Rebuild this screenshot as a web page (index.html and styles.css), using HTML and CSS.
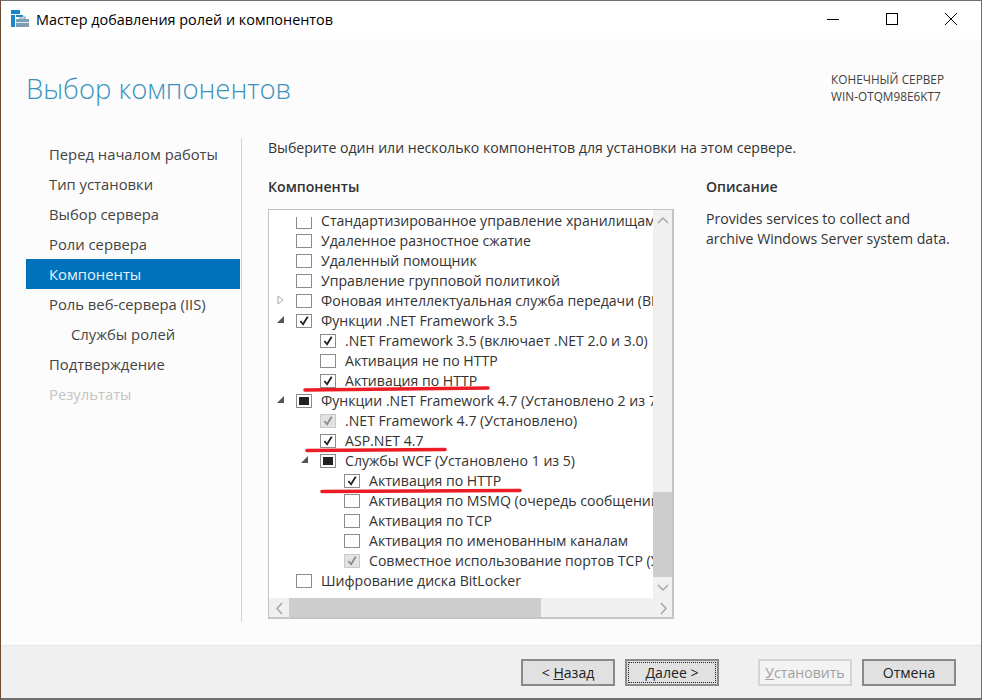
FILE: index.html
```html
<!DOCTYPE html>
<html lang="ru">
<head>
<meta charset="utf-8">
<title>Мастер добавления ролей и компонентов</title>
<link rel="stylesheet" href="styles.css">
</head>
<body>
<div class="window">
  <div class="titlebar">
    <svg class="appicon" width="18" height="18" viewBox="0 0 18 18"><rect x="0" y="0" width="9" height="4" fill="#1a86c8"/><rect x="0" y="5" width="4" height="12" fill="#1a86c8"/><rect x="5" y="5" width="7" height="2" fill="#1a86c8"/><rect x="5" y="9" width="13" height="8" fill="#7d9fb5"/><rect x="9" y="7" width="5" height="2" fill="none" stroke="#7d9fb5"/><rect x="5" y="12" width="13" height="1" fill="#dfe8ee"/></svg>
    <span class="wintitle">Мастер добавления ролей и компонентов</span>
    <div class="controls">
      <svg width="12" height="12" viewBox="0 0 12 12"><path d="M0 6.5H12" stroke="#000"/></svg>
      <svg width="12" height="12" viewBox="0 0 12 12"><rect x=".5" y=".5" width="11" height="11" fill="none" stroke="#000"/></svg>
      <svg width="12" height="12" viewBox="0 0 12 12"><path d="M0 0L12 12M12 0L0 12" stroke="#000"/></svg>
    </div>
  </div>
  <div class="header">
    <h1>Выбор компонентов</h1>
    <div class="server">КОНЕЧНЫЙ СЕРВЕР<br>WIN-OTQM98E6KT7</div>
  </div>
  <div class="main">
    <nav class="steps">
      <div class="step">Перед началом работы</div>
      <div class="step">Тип установки</div>
      <div class="step">Выбор сервера</div>
      <div class="step">Роли сервера</div>
      <div class="step active">Компоненты</div>
      <div class="step">Роль веб-сервера (IIS)</div>
      <div class="step sub">Службы ролей</div>
      <div class="step">Подтверждение</div>
      <div class="step disabled">Результаты</div>
    </nav>
    <div class="content">
      <p class="intro">Выберите один или несколько компонентов для установки на этом сервере.</p>
      <div class="columns">
        <section class="features">
          <h2>Компоненты</h2>
          <div class="listbox">
            <div class="tree">
              <div class="row"><span class="arrow"></span><span class="box cut"></span><span class="label">Стандартизированное управление хранилищами</span></div>
              <div class="row"><span class="arrow"></span><span class="box"></span><span class="label">Удаленное разностное сжатие</span></div>
              <div class="row"><span class="arrow"></span><span class="box"></span><span class="label">Удаленный помощник</span></div>
              <div class="row"><span class="arrow"></span><span class="box"></span><span class="label">Управление групповой политикой</span></div>
              <div class="row"><span class="arrow"><svg width="7" height="10" viewBox="0 0 7 10"><path d="M1 1L6 5L1 9Z" fill="#fff" stroke="#a6a6a6"/></svg></span><span class="box"></span><span class="label">Фоновая интеллектуальная служба передачи (BITS)</span></div>
              <div class="row"><span class="arrow"><svg width="7" height="10" viewBox="0 0 7 10"><path d="M0 8H7V1Z" fill="#555"/></svg></span><span class="box"><svg class="tick" viewBox="0 0 14 13"><path d="M3 6.5L6 10L11 2" fill="none" stroke="#222" stroke-width="2"/></svg></span><span class="label">Функции .NET Framework 3.5</span></div>
              <div class="row l1"><span class="arrow"></span><span class="box"><svg class="tick" viewBox="0 0 14 13"><path d="M3 6.5L6 10L11 2" fill="none" stroke="#222" stroke-width="2"/></svg></span><span class="label">.NET Framework 3.5 (включает .NET 2.0 и 3.0)</span></div>
              <div class="row l1"><span class="arrow"></span><span class="box"></span><span class="label">Активация не по HTTP</span></div>
              <div class="row l1"><span class="arrow"></span><span class="box"><svg class="tick" viewBox="0 0 14 13"><path d="M3 6.5L6 10L11 2" fill="none" stroke="#222" stroke-width="2"/></svg></span><span class="label">Активация по HTTP</span></div>
              <div class="row"><span class="arrow"><svg width="7" height="10" viewBox="0 0 7 10"><path d="M0 8H7V1Z" fill="#555"/></svg></span><span class="box"><span class="mixed"></span></span><span class="label">Функции .NET Framework 4.7 (Установлено 2 из 7)</span></div>
              <div class="row l1"><span class="arrow"></span><span class="box locked"><svg class="tick" viewBox="0 0 14 13"><path d="M3 6.5L6 10L11 2" fill="none" stroke="#8a8a8a" stroke-width="2"/></svg></span><span class="label">.NET Framework 4.7 (Установлено)</span></div>
              <div class="row l1"><span class="arrow"></span><span class="box"><svg class="tick" viewBox="0 0 14 13"><path d="M3 6.5L6 10L11 2" fill="none" stroke="#222" stroke-width="2"/></svg></span><span class="label">ASP.NET 4.7</span></div>
              <div class="row l1"><span class="arrow"><svg width="7" height="10" viewBox="0 0 7 10"><path d="M0 8H7V1Z" fill="#555"/></svg></span><span class="box"><span class="mixed"></span></span><span class="label">Службы WCF (Установлено 1 из 5)</span></div>
              <div class="row l2"><span class="arrow"></span><span class="box"><svg class="tick" viewBox="0 0 14 13"><path d="M3 6.5L6 10L11 2" fill="none" stroke="#222" stroke-width="2"/></svg></span><span class="label">Активация по HTTP</span></div>
              <div class="row l2"><span class="arrow"></span><span class="box"></span><span class="label">Активация по MSMQ (очередь сообщений)</span></div>
              <div class="row l2"><span class="arrow"></span><span class="box"></span><span class="label">Активация по TCP</span></div>
              <div class="row l2"><span class="arrow"></span><span class="box"></span><span class="label">Активация по именованным каналам</span></div>
              <div class="row l2"><span class="arrow"></span><span class="box locked"><svg class="tick" viewBox="0 0 14 13"><path d="M3 6.5L6 10L11 2" fill="none" stroke="#8a8a8a" stroke-width="2"/></svg></span><span class="label">Совместное использование портов TCP (Установлено)</span></div>
              <div class="row"><span class="arrow"></span><span class="box"></span><span class="label">Шифрование диска BitLocker</span></div>
            </div>
            <div class="vscroll">
              <svg width="20" height="21" viewBox="0 0 20 21"><path d="M5 13L10 8L15 13" fill="none" stroke="#a6a6a6" stroke-width="1.5"/></svg>
              <div class="vtrack"><div class="vthumb"></div></div>
              <svg width="20" height="21" viewBox="0 0 20 21"><path d="M5 8L10 13L15 8" fill="none" stroke="#a6a6a6" stroke-width="1.5"/></svg>
            </div>
            <div class="hscroll">
              <svg width="20" height="21" viewBox="0 0 20 21"><path d="M13 5L8 10.5L13 16" fill="none" stroke="#a6a6a6" stroke-width="1.5"/></svg>
              <div class="htrack"><div class="hthumb"></div></div>
              <svg width="20" height="21" viewBox="0 0 20 21"><path d="M8 5L13 10.5L8 16" fill="none" stroke="#a6a6a6" stroke-width="1.5"/></svg>
            </div>
            <svg class="marks" width="406" height="410" viewBox="0 0 406 410"><path d="M36 180L219 178M38 240.500L176 239.500M53 281.500L251 280.500" stroke="#ec1c24" stroke-width="3.6" stroke-linecap="round" fill="none"/></svg>
          </div>
        </section>
        <aside class="description">
          <h2>Описание</h2>
          <p>Provides services to collect and<br>archive Windows Server system data.</p>
        </aside>
      </div>
    </div>
  </div>
  <div class="footer">
    <button class="btn">&lt; <u>Н</u>азад</button>
    <button class="btn focused"><span class="focus"><span><u>Д</u>алее &gt;</span></span></button>
    <button class="btn off install"><u>У</u>становить</button>
    <button class="btn">Отмена</button>
  </div>
</div>
</body>
</html>
```
FILE: styles.css
```css
* { box-sizing: border-box; }
html, body { margin: 0; height: 100%; overflow: hidden; }
body { font-family: "Open Sans", "Noto Sans", sans-serif; font-size: 14.1px; color: #333; background: #fff; }
.window { width: 982px; height: 700px; display: flex; flex-direction: column; border: 1px solid #6f6f6f; border-left-color: #6f4a32; border-bottom-width: 2px; background: #fcfcfc; }
.titlebar { height: 38px; flex: none; background: #fff; display: flex; align-items: center; padding-left: 10px; }
.appicon { flex: none; margin-top: -2px; }
.wintitle { margin-left: 7px; font-size: 14.4px; color: #000; margin-top: -1px; }
.controls { margin-left: auto; display: flex; gap: 47px; padding-right: 24px; margin-top: -2px; }
.controls svg { display: block; }
.header { height: 99px; flex: none; display: flex; justify-content: space-between; padding: 28px 37px 0 25px; }
h1 { margin: 0; font-weight: 300; font-size: 27.5px; line-height: 44px; color: #3b93bd; }
.server { font-size: 11.8px; line-height: 17px; color: #404040; padding-top: 3px; margin-top: 1px; white-space: nowrap; }
.main { flex: 1; display: flex; min-height: 0; padding-right: 7px; }
.steps { width: 214px; flex: none; margin-left: 25px; padding-top: 1px; }
.step { height: 30px; line-height: 31px; padding-left: 23px; font-size: 14.8px; color: #444; white-space: nowrap; }
.step.active { background: #0071bc; color: #e8f2fa; }
.step.sub { padding-left: 45px; }
.step.disabled { color: #c4c4c4; }
.content { flex: 1; margin-left: 1px; margin-bottom: 23px; border-left: 1px solid #d4d4d4; padding-left: 26px; min-width: 0; }
.intro { margin: 0; height: 20px; line-height: 20px; color: #333; }
.columns { display: flex; margin-top: 19px; }
.features { width: 407px; flex: none; }
h2 { margin: 0; font-size: 14.1px; font-weight: 600; line-height: 20px; color: #333; }
.listbox { position: relative; width: 406px; height: 410px; margin-top: 12px; border: 2px solid #c4c4c4; border-width: 1px 2px 2px 1px; background: #fff; display: grid; grid-template-columns: 384px 20px; grid-template-rows: 388px 21px; overflow: hidden; }
.tree { overflow: hidden; padding-top: 0; }
.row { height: 20px; display: flex; align-items: center; padding-left: 5px; white-space: nowrap; color: #333; }
.row.l1 { padding-left: 29px; }
.row.l2 { padding-left: 53px; }
.arrow { width: 22px; flex: none; display: flex; align-items: center; padding-left: 3px; }
.arrow svg { display: block; }
.box { width: 16px; height: 14px; flex: none; border: 1px solid #8c8c8c; background: #fff; margin: 2px 9px 0 0; position: relative; display: flex; align-items: center; justify-content: center; }
.box.cut { border-top: 0; height: 12px; margin-top: 5px; }
.box.locked { background: #e3e3e3; border-color: #c8c8c8; }
.tick { width: 14px; height: 12px; display: block; }
.mixed { width: 10px; height: 8px; background: #222; display: block; }
.label { font-size: 14.1px; }
.vscroll { grid-column: 2; grid-row: 1; background: #f0f0f0; display: flex; flex-direction: column; }
.vscroll svg, .hscroll svg { display: block; flex: none; }
.vtrack { flex: 1; position: relative; }
.vthumb { position: absolute; left: 0; right: 0; bottom: 0; height: 85px; background: #cdcdcd; }
.hscroll { grid-column: 1 / 3; grid-row: 2; background: #f0f0f0; display: flex; }
.htrack { width: 364px; position: relative; }
.hthumb { position: absolute; left: 0; top: 0; bottom: 0; width: 252px; background: #cdcdcd; }
.marks { position: absolute; left: 0; top: 0; pointer-events: none; }
.description { margin-left: 31px; width: 260px; white-space: nowrap; }
.description p { margin: 12px 0 0; line-height: 20px; color: #333; font-size: 14.1px; }
.footer { height: 53px; flex: none; background: #f0f0f0; border-top: 1px solid #e6e6e6; display: flex; align-items: flex-start; padding: 13px 0 0 520px; }
.btn { width: 94px; height: 27px; padding: 0; background: #e1e1e1; border: 2px solid #8a8a8a; font: inherit; font-size: 14.1px; color: #222; margin-right: 10px; }
.focused { padding: 1px; margin-right: 39px; }
.focus { display: flex; align-items: center; justify-content: center; height: 100%; border: 1px dotted #222; }
.off { background: #f3f3f3; border-color: #d4d4d4; color: #a0a0a0; }
```
